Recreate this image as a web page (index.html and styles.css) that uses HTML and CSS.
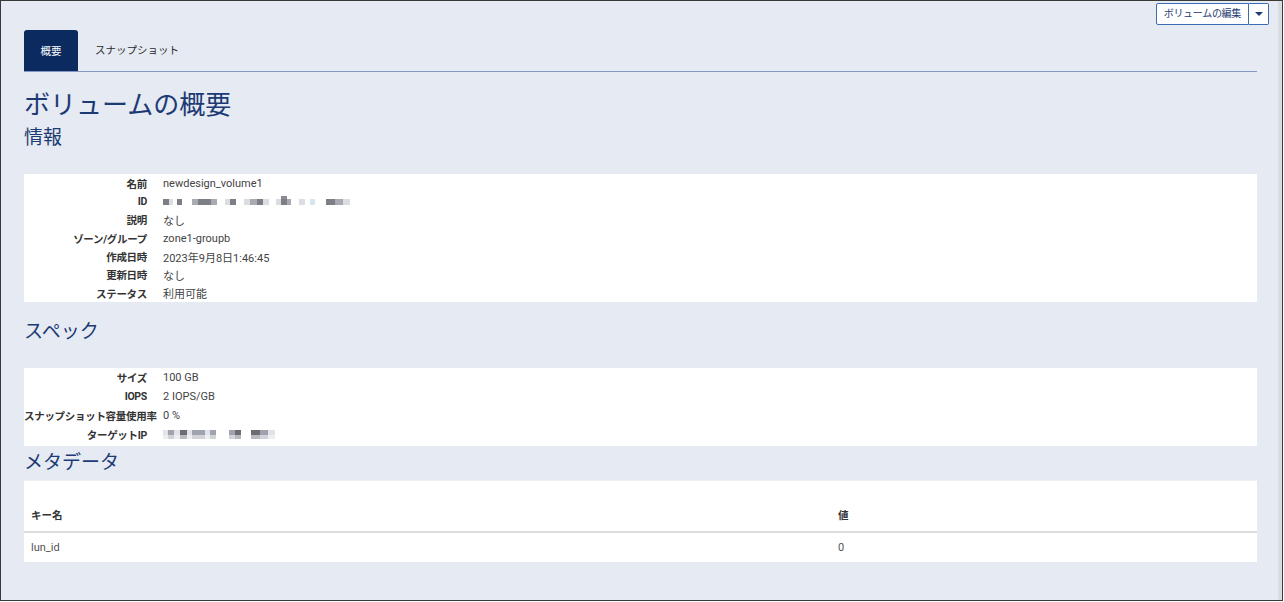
FILE: index.html
```html
<!DOCTYPE html>
<html lang="ja">
<head>
<meta charset="utf-8">
<title>ボリュームの概要</title>
<link rel="stylesheet" href="styles.css">
</head>
<body>
<div class="frame">
  <div class="main">
    <div class="toolbar">
      <div class="btn-group">
        <button class="btn">ボリュームの編集</button>
        <button class="btn btn-caret"><span class="caret"></span></button>
      </div>
    </div>
    <div class="content">
      <nav class="tabs">
        <a class="tab active">概要</a>
        <a class="tab">スナップショット</a>
      </nav>

      <h1 class="title">ボリュームの概要</h1>

      <h2 class="section-title first">情報</h2>
      <dl class="panel props">
        <div class="row"><dt>名前</dt><dd>newdesign_volume1</dd></div>
        <div class="row"><dt>ID</dt><dd>
          <span class="blur">
            <i class="b d w6"></i><i class="b l w4"></i><i class="g w4"></i><i class="b d w5"></i><i class="g w10"></i><i class="b m w6"></i><i class="b d w13"></i><i class="b m w6"></i><i class="g w8"></i><i class="b l w5"></i><i class="b d w6"></i><i class="g w8"></i><i class="b l w6"></i><i class="b m w7"></i><i class="b d w6"></i><i class="b l w6"></i><i class="g w7"></i><i class="b l w5"></i><i class="b d w6 up"></i><i class="b m w4"></i><i class="g w8"></i><i class="b l w6"></i><i class="g w5"></i><i class="b c w5"></i><i class="g w11"></i><i class="b d w9"></i><i class="b m w8"></i><i class="b l w7"></i>
          </span>
        </dd></div>
        <div class="row"><dt>説明</dt><dd>なし</dd></div>
        <div class="row"><dt>ゾーン/グループ</dt><dd>zone1-groupb</dd></div>
        <div class="row"><dt>作成日時</dt><dd>2023年9月8日1:46:45</dd></div>
        <div class="row"><dt>更新日時</dt><dd>なし</dd></div>
        <div class="row"><dt>ステータス</dt><dd>利用可能</dd></div>
      </dl>

      <h2 class="section-title">スペック</h2>
      <dl class="panel props spec">
        <div class="row"><dt>サイズ</dt><dd>100 GB</dd></div>
        <div class="row"><dt>IOPS</dt><dd>2 IOPS/GB</dd></div>
        <div class="row"><dt>スナップショット容量使用率</dt><dd>0 %</dd></div>
        <div class="row"><dt>ターゲットIP</dt><dd>
          <span class="blur tall">
            <i class="b l w5"></i><i class="b m w6"></i><i class="b l w6"></i><i class="b d w7"></i><i class="b l w5"></i><i class="b m w7"></i><i class="b m w6"></i><i class="b l w5"></i><i class="b m w6"></i><i class="g w13"></i><i class="b m w6"></i><i class="b d w6"></i><i class="g w10"></i><i class="b d w9"></i><i class="b m w8"></i><i class="b l w7"></i>
          </span>
        </dd></div>
      </dl>

      <h2 class="section-title meta">メタデータ</h2>
      <div class="panel table-panel">
        <table class="meta-table">
          <thead>
            <tr><th class="col-key">キー名</th><th>値</th></tr>
          </thead>
          <tbody>
            <tr><td>lun_id</td><td>0</td></tr>
          </tbody>
        </table>
      </div>
    </div>
  </div>
  <div class="edge"></div>
</div>
</body>
</html>
```

FILE: styles.css
```css
* { box-sizing: border-box; }

html, body {
  margin: 0;
  padding: 0;
  background: #ffffff;
}

body {
  font-family: Roboto, "Noto Sans CJK JP", sans-serif;
  font-size: 11px;
  color: #444;
}

.frame {
  width: 1283px;
  height: 601px;
  border: 1px solid #3a3a3a;
  background: #e6eaf3;
  display: flex;
  overflow: hidden;
}

.main {
  flex: 1;
  display: flex;
  flex-direction: column;
}

.edge {
  width: 4px;
  background: #d9dce3;
}

/* toolbar */
.toolbar {
  display: flex;
  justify-content: flex-end;
  padding: 2px 9px 0 0;
}

.btn-group {
  display: flex;
}

.btn {
  font-family: Roboto, "Noto Sans CJK JP", sans-serif;
  font-size: 10px;
  letter-spacing: -0.3px;
  color: #1e3c74;
  background: #ffffff;
  border: 1px solid #3e6cb4;
  height: 22px;
  padding: 0 7px;
  margin: 0;
  line-height: 20px;
  border-radius: 2px 0 0 2px;
}

.btn-caret {
  width: 20px;
  padding: 0;
  border-left: none;
  border-radius: 0 2px 2px 0;
  display: flex;
  align-items: center;
  justify-content: center;
}

.caret {
  width: 0;
  height: 0;
  border-left: 4px solid transparent;
  border-right: 4px solid transparent;
  border-top: 4px solid #1e3c74;
}

/* content */
.content {
  padding: 5px 21px 0 23px;
}

.tabs {
  display: flex;
  border-bottom: 1px solid #8496c2;
  height: 42px;
}

.tab {
  display: flex;
  align-items: center;
  justify-content: center;
  padding: 0 17px 2px 17px;
  font-size: 10.5px;
  color: #2a2a2a;
  font-family: "Noto Sans CJK JP", sans-serif;
}

.tab.active {
  width: 54px;
  padding: 0;
  background: #0b2a5f;
  color: #ffffff;
  border-radius: 3px 3px 0 0;
}

.title {
  margin: 15px 0 0 0;
  font-family: "Noto Sans CJK JP", sans-serif;
  font-weight: 400;
  font-size: 26px;
  line-height: 32px;
  color: #1c3b74;
}

.section-title {
  margin: 16px 0 26px 0;
  font-family: "Noto Sans CJK JP", sans-serif;
  font-weight: 400;
  font-size: 19px;
  line-height: 24px;
  color: #1c3b74;
}

.section-title.first {
  margin-top: 5px;
}

.section-title.meta {
  margin-top: 3px;
  margin-bottom: 7px;
}

.panel {
  background: #ffffff;
  margin: 0;
}

.props {
  padding: 0;
}

.props .row {
  display: flex;
  height: 18.35px;
  align-items: center;
}

.spec .row {
  height: 18.8px;
}

.spec {
  padding-bottom: 2px;
}

.props dt {
  width: 123px;
  flex: 0 0 123px;
  text-align: right;
  white-space: nowrap;
  font-family: Roboto, "Noto Sans CJK JP", sans-serif;
  font-weight: 700;
  font-size: 10.5px;
  letter-spacing: -0.3px;
  color: #333;
}

.props dd {
  margin: 0 0 0 16px;
  font-size: 11px;
  color: #444;
  white-space: nowrap;
}

/* obscured values */
.blur {
  display: inline-flex;
  align-items: center;
  height: 8px;
  vertical-align: middle;
}

.blur.tall {
  height: 10px;
}

.blur i {
  display: block;
  height: 6px;
}

.blur.tall i {
  height: 9px;
}

.blur .b.d { background: #7d7f86; }
.blur .b.m { background: #a9abb3; }
.blur .b.l { background: #dcdde3; }
.blur .b.c { background: #d6e8ee; }
.blur.tall .b.d { background: linear-gradient(#6f6a6e 0 55%, #b9babf 55%); }
.blur.tall .b.m { background: linear-gradient(#9fa3ae 0 55%, #d2d3d8 55%); }
.blur.tall .b.l { background: linear-gradient(#e2e3ea 0 55%, #eceef0 55%); }
.blur .g { background: transparent; }
.blur .up { box-shadow: 0 -3px 0 #8a8c92; }

.w3 { width: 3px; }
.w4 { width: 4px; }
.w5 { width: 5px; }
.w6 { width: 6px; }
.w7 { width: 7px; }
.w8 { width: 8px; }
.w9 { width: 9px; }
.w10 { width: 10px; }
.w11 { width: 11px; }
.w13 { width: 13px; }

/* metadata table */
.table-panel {
  border-top: 1px solid #eef0f4;
}

.meta-table {
  width: 100%;
  border-collapse: collapse;
}

.meta-table th {
  text-align: left;
  font-family: Roboto, "Noto Sans CJK JP", sans-serif;
  font-weight: 700;
  font-size: 10.5px;
  color: #333;
  height: 51px;
  padding: 0 7px 9px 7px;
  vertical-align: bottom;
  border-bottom: 2px solid #dcdde0;
}

.meta-table th.col-key {
  width: 807px;
}

.meta-table td {
  height: 30px;
  padding: 0 7px;
  font-size: 11px;
  color: #555;
  vertical-align: middle;
}
```
